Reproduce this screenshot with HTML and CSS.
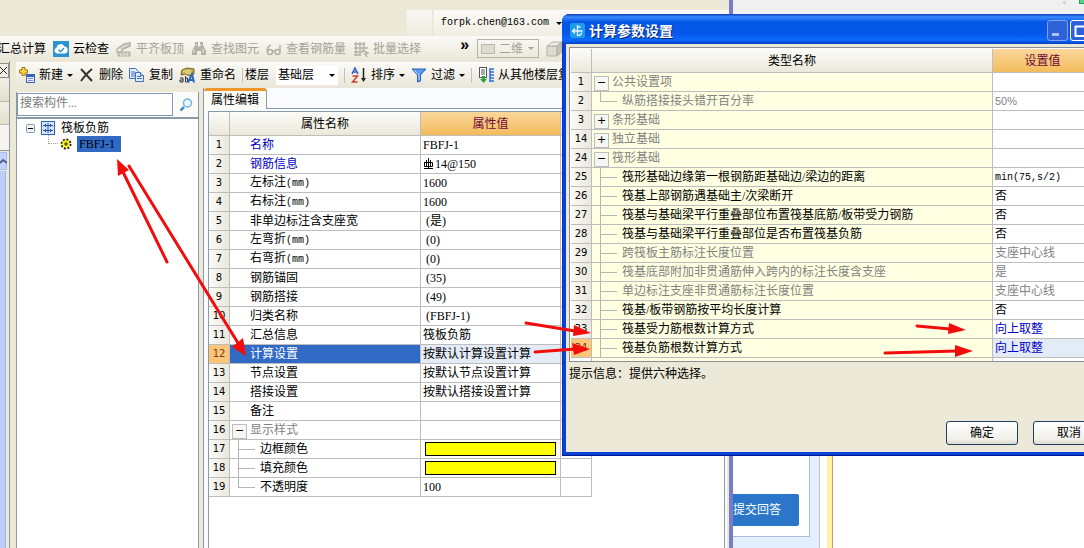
FILE: index.html
```html
<!DOCTYPE html>
<html lang="zh-CN">
<head>
<meta charset="utf-8">
<title>计算参数设置</title>
<link rel="stylesheet" href="styles.css">
</head>
<body>
<div class="desktop">

<section class="browser">
  <div class="browser-top"><i class="dot"></i><i class="green"></i></div>
  <div class="browser-page">
    <div class="answer">
      <div class="answer-card"><button class="submit" type="button">提交回答</button></div>
    </div>
    <div class="stripe"></div>
  </div>
</section>

<main class="app">
  <header class="app-top">
    <span class="blank-tab"></span>
    <button class="account" type="button"><span class="mono">forpk.chen@163.com</span><i class="caret"></i></button>
  </header>

  <nav class="bar bar-main">
    <button class="tool first" type="button">汇总计算</button>
    <button class="tool" type="button">
      <svg width="16" height="16" viewBox="0 0 16 16"><rect width="16" height="16" fill="#2b93cf"/><path d="M4 12.500a3 3 0 0 1-.5-5.800A4.200 4.200 0 0 1 11.500 5.600 3.500 3.500 0 0 1 12 12.500z" fill="#fff"/><path d="M5.500 8.800l2 2 3.500-3.600" fill="none" stroke="#2b93cf" stroke-width="1.500"/></svg>云检查</button>
    <button class="tool" type="button" disabled>
      <svg width="16" height="16" viewBox="0 0 16 16" fill="none" stroke="#b4b1a4"><path d="M1 8l7-5 6-1v3L7 8" fill="#d8d5c8" stroke-width="1.500"/><path d="M1 8v3h4l2-3" stroke-width="1.500"/><path d="M2 11h12v4H2z" fill="#c4c1b5"/><path d="M5 12v3M8 12v3M11 12v3" stroke="#f1efe6"/></svg>平齐板顶</button>
    <button class="tool" type="button" disabled>
      <svg width="16" height="16" viewBox="0 0 16 16" fill="#b4b1a4"><path d="M4 1h3v4l1 1 1-1V1h3v3l3 6v4h-5v-4H6v4H1v-4l3-6z"/><path d="M3 8v4M12 8v4M5 3v2M10 3v2" stroke="#e9e6d9"/></svg>查找图元</button>
    <button class="tool" type="button" disabled>
      <svg width="16" height="16" viewBox="0 0 16 16" fill="none" stroke="#b4b1a4" stroke-width="1.500"><path d="M5 4C2 5 1 8 1 11"/><circle cx="4" cy="11" r="2.500"/><path d="M6.500 10h3"/><circle cx="11.500" cy="11" r="2.500"/><path d="M14 11V4"/></svg>查看钢筋量</button>
    <button class="tool" type="button" disabled>
      <svg width="16" height="16" viewBox="0 0 16 16" fill="none" stroke="#b4b1a4"><path d="M1 3h11M1 7h14M1 11h9M1 14h7M3 1v14M7 1v13M11 1v9" stroke-width="1.300"/><path d="M9 9l6 3-3 1 2 3" stroke-width="1.500"/></svg>批量选择</button>
    <button class="more" type="button" aria-label="更多">»</button>
    <label class="view">
      <svg width="14" height="10" viewBox="0 0 14 10"><rect x=".5" y=".5" width="13" height="9" fill="#dedbd0" stroke="#bbb8ac"/></svg>
      <select disabled aria-label="视图"><option>二维</option></select><i class="caret"></i>
    </label>
    <button class="cube" type="button" disabled aria-label="三维">
      <svg width="17" height="16" viewBox="0 0 17 16" stroke="#b4b1a4" fill="#dedbd0"><path d="M1 5h10v10H1z"/><path d="M1 5l5-4h10l-5 4z" fill="#eeece3"/><path d="M11 5l5-4v10l-5 4z" fill="#c4c1b5"/></svg>
    </button>
  </nav>

  <div class="work">
    <aside class="strip">
      <button class="strip-close" type="button" aria-label="关闭"><svg width="7" height="7" viewBox="0 0 7 7" stroke="#222"><path d="M0 0l7 7M7 0L0 7"/></svg></button>
      <div class="strip-head"></div>
      <div class="strip-head"></div>
      <div class="strip-gap"></div>
      <div class="scroll-up"><svg width="7" height="6" viewBox="0 0 7 6" fill="none" stroke="#4d6185" stroke-width="2"><path d="M0 5l3-3 4 3"/></svg></div>
      <div class="scroll-thumb"></div>
    </aside>

    <div class="workspace">
      <nav class="bar bar-sub">
        <button class="tool" type="button">
          <svg width="16" height="16" viewBox="0 0 16 16"><path d="M3 .5h3v2.500h2.500v3H6v2.500H3V6H.5V3H3z" fill="#f9d54a" stroke="#a87808"/><rect x="7.500" y="7.500" width="8" height="8" fill="#e8f0ff" stroke="#3a62b8"/><path d="M8 9h7" stroke="#3a62b8" stroke-width="2"/><path d="M9 11.500h5M9 13.500h5" stroke="#6f93d6"/></svg>新建<i class="caret"></i></button>
        <button class="tool" type="button">
          <svg width="16" height="16" viewBox="0 0 16 16" stroke="#333" stroke-width="2" fill="none"><path d="M2 2l11 12M13 2C8 6 5 10 2 14"/></svg>删除</button>
        <button class="tool" type="button">
          <svg width="16" height="16" viewBox="0 0 16 16" fill="#e4eeff" stroke="#3f6fc4"><path d="M.5 1.500h6l3 3v7h-9z"/><path d="M2 5h4M2 7h4M2 9h4"/><path d="M6.500 5.500h5l3 3v6h-8z"/><path d="M8 9.500h4M8 11.500h5M11.500 5.500v3h3"/></svg>复制</button>
        <button class="tool" type="button">
          <svg width="17" height="16" viewBox="0 0 17 16" fill="none"><path d="M3 3l5-2 7 1v5l-5 2-3-2-5 1z" fill="#c9b24a" stroke="#6f6325"/><path d="M4 4h8M6 6h7" stroke="#f5e9a0"/><path d="M1 11h3v4M4 13H1v2h3M6.500 9v6h2v-4h-2" stroke="#333"/><path d="M9 15.500l4-8.500 2 8.500M11 13h4" stroke="#2b66c4" stroke-width="2"/></svg>重命名</button>
        <i class="sep"></i>
        <label class="floor"><span>楼层</span>
          <span class="floor-box"><select aria-label="楼层"><option>基础层</option></select><i class="caret"></i></span></label>
        <i class="sep"></i>
        <button class="tool" type="button">
          <svg width="16" height="16" viewBox="0 0 16 16" fill="none"><path d="M1 7l3-6 3 6M2 5h4" stroke="#2f5fc0" stroke-width="1.500"/><path d="M1.500 9h5l-5 6h5" stroke="#c8402c" stroke-width="1.500"/><path d="M12.500 1v12" stroke="#222" stroke-width="1.500"/><path d="M10 11l2.500 4 2.500-4z" fill="#222"/></svg>排序<i class="caret"></i></button>
        <button class="tool" type="button">
          <svg width="16" height="16" viewBox="0 0 16 16"><path d="M1 2h14L9.500 8v6l-3 1V8z" fill="#5b9bee" stroke="#2b5fbd"/><path d="M3 3l5 5v5" fill="none" stroke="#b9d8ff"/></svg>过滤<i class="caret"></i></button>
        <i class="sep"></i>
        <button class="tool" type="button">
          <svg width="16" height="16" viewBox="0 0 16 16"><rect x="1.500" y=".5" width="7" height="10" fill="#fff" stroke="#555"/><path d="M3 3h4M3 5h4M3 7h4" stroke="#555"/><path d="M4 9h3v3h2l-3.500 4L2 12h2z" fill="#2fa040"/><path d="M16 2h-4v13M12 5h4M12 8h4M12 11h4M12 14h4" fill="none" stroke="#2f6fd0" stroke-width="1.500"/></svg>从其他楼层复制</button>
      </nav>

      <div class="panels">
        <section class="side">
          <form class="search">
            <input type="text" placeholder="搜索构件..." aria-label="搜索构件">
            <button type="button" aria-label="搜索"><svg width="14" height="14" viewBox="0 0 14 14" fill="none"><path d="M1.500 12.500L5 9" stroke="#4a90c8" stroke-width="2.500"/><circle cx="8.500" cy="5" r="4" fill="#eef8ff" stroke="#6cb6e4" stroke-width="1.500"/></svg></button>
          </form>
          <ul class="tree">
            <li><svg width="9" height="9" viewBox="0 0 9 9"><rect x=".5" y=".5" width="8" height="8" rx="1" fill="#f4f3ee" stroke="#7b9ac0"/><path d="M2 4.500h5" stroke="#000"/></svg>
              <svg class="grid-ic" width="14" height="14" viewBox="0 0 14 14"><rect x=".5" y=".5" width="13" height="13" fill="#d5e4fb" stroke="#3464b4"/><path d="M2 4.500h10M2 9.500h10M7 2v10M4.500 3v3M9.500 3v3M4.500 8v3M9.500 8v3" stroke="#24529f"/></svg>
              <span>筏板负筋</span></li>
            <li class="child"><i class="elbow"></i><svg width="12" height="12" viewBox="0 0 12 12"><circle cx="6" cy="6" r="4.500" fill="#fff21c" stroke="#222" stroke-width="2" stroke-dasharray="2 1.500"/><circle cx="6" cy="6" r="3.500" fill="#fff21c"/><path d="M6 4v4M4 6h4" stroke="#222"/></svg>
              <span class="picked">FBFJ-1</span></li>
          </ul>
        </section>

        <section class="props">
          <div class="tabs"><button class="tab" type="button">属性编辑</button></div>
          <div class="sheet">
            <table class="grid prop-grid">
              <colgroup><col class="c-no"><col class="c-name"><col class="c-val"><col class="c-extra"></colgroup>
              <thead><tr><th></th><th>属性名称</th><th class="hot">属性值</th><th></th></tr></thead>
              <tbody>
                <tr><th>1</th><td class="blue">名称</td><td>FBFJ-1</td><td></td></tr>
                <tr><th>2</th><td class="blue">钢筋信息</td><td><svg class="rebar" width="11" height="12" viewBox="0 0 11 12" fill="none" stroke="#000"><path d="M5.500 0v10M3.500 2v7M7.500 2v7M1.500 4v4.500h8V4.500h-8M1 10.500h9"/></svg>14@150</td><td></td></tr>
                <tr><th>3</th><td>左标注<span class="mono">(mm)</span></td><td>1600</td><td></td></tr>
                <tr><th>4</th><td>右标注<span class="mono">(mm)</span></td><td>1600</td><td></td></tr>
                <tr><th>5</th><td>非单边标注含支座宽</td><td>&nbsp;(是)</td><td></td></tr>
                <tr><th>6</th><td>左弯折<span class="mono">(mm)</span></td><td>&nbsp;(0)</td><td></td></tr>
                <tr><th>7</th><td>右弯折<span class="mono">(mm)</span></td><td>&nbsp;(0)</td><td></td></tr>
                <tr><th>8</th><td>钢筋锚固</td><td>&nbsp;(35)</td><td></td></tr>
                <tr><th>9</th><td>钢筋搭接</td><td>&nbsp;(49)</td><td></td></tr>
                <tr><th>10</th><td>归类名称</td><td>&nbsp;(FBFJ-1)</td><td></td></tr>
                <tr><th>11</th><td>汇总信息</td><td>筏板负筋</td><td></td></tr>
                <tr class="active"><th>12</th><td class="sel">计算设置</td><td>按默认计算设置计算</td><td></td></tr>
                <tr><th>13</th><td>节点设置</td><td>按默认节点设置计算</td><td></td></tr>
                <tr><th>14</th><td>搭接设置</td><td>按默认搭接设置计算</td><td></td></tr>
                <tr><th>15</th><td>备注</td><td></td><td></td></tr>
                <tr><th>16</th><td class="group open">显示样式</td><td></td><td></td></tr>
                <tr><th>17</th><td class="leaf">边框颜色</td><td><span class="swatch"></span></td><td></td></tr>
                <tr><th>18</th><td class="leaf">填充颜色</td><td><span class="swatch"></span></td><td></td></tr>
                <tr><th>19</th><td class="leaf last">不透明度</td><td>100</td><td></td></tr>
              </tbody>
            </table>
          </div>
        </section>
      </div>
    </div>
  </div>
</main>

<section class="dialog" role="dialog" aria-labelledby="dlg-title">
  <header class="title">
    <svg width="15" height="15" viewBox="0 0 15 15"><rect width="15" height="15" rx="2" fill="#1f9be8"/><path d="M7.500 2v11M2 8h10.500M5 5.500L2.500 8 5 10.500M7.500 4h3M7.500 12.500c2 0 4-1 4-3" fill="none" stroke="#e8f6ff" stroke-width="1.300"/></svg>
    <h1 id="dlg-title">计算参数设置</h1>
    <button class="win" type="button" aria-label="最小化"><svg width="19" height="19" viewBox="0 0 19 19"><path d="M4 13.500h7" stroke="#a9c1f5" stroke-width="3"/></svg></button>
    <button class="win bright" type="button" aria-label="最大化"><svg width="19" height="19" viewBox="0 0 19 19"><path d="M4.500 5v10h10V5M4 5.500h11" fill="none" stroke="#fff" stroke-width="2"/></svg></button>
    <button class="win close" type="button" aria-label="关闭"><svg width="19" height="19" viewBox="0 0 19 19"><path d="M5 5l9 9M14 5l-9 9" stroke="#fff" stroke-width="2"/></svg></button>
  </header>
  <div class="dlg-body">
    <div class="dlg-sheet">
      <table class="grid dlg-grid">
        <colgroup><col class="d-no"><col class="d-name"><col class="d-val"><col></colgroup>
        <thead><tr><th></th><th>类型名称</th><th class="hot">设置值</th><th></th></tr></thead>
        <tbody>
          <tr><th>1</th><td class="group open">公共设置项</td><td></td><td></td></tr>
          <tr><th>2</th><td class="leaf last dim">纵筋搭接接头错开百分率</td><td class="dim small">50%</td><td></td></tr>
          <tr><th>3</th><td class="group">条形基础</td><td></td><td></td></tr>
          <tr><th>14</th><td class="group">独立基础</td><td></td><td></td></tr>
          <tr><th>24</th><td class="group open">筏形基础</td><td></td><td></td></tr>
          <tr><th>25</th><td class="leaf">筏形基础边缘第一根钢筋距基础边/梁边的距离</td><td><span class="mono">min(75,s/2)</span></td><td></td></tr>
          <tr><th>26</th><td class="leaf">筏基上部钢筋遇基础主/次梁断开</td><td>否</td><td></td></tr>
          <tr><th>27</th><td class="leaf">筏基与基础梁平行重叠部位布置筏基底筋/板带受力钢筋</td><td>否</td><td></td></tr>
          <tr><th>28</th><td class="leaf">筏基与基础梁平行重叠部位是否布置筏基负筋</td><td>否</td><td></td></tr>
          <tr><th>29</th><td class="leaf dim">跨筏板主筋标注长度位置</td><td class="dim">支座中心线</td><td></td></tr>
          <tr><th>30</th><td class="leaf dim">筏基底部附加非贯通筋伸入跨内的标注长度含支座</td><td class="dim">是</td><td></td></tr>
          <tr><th>31</th><td class="leaf dim">单边标注支座非贯通筋标注长度位置</td><td class="dim">支座中心线</td><td></td></tr>
          <tr><th>32</th><td class="leaf">筏基/板带钢筋按平均长度计算</td><td>否</td><td></td></tr>
          <tr><th>33</th><td class="leaf">筏基受力筋根数计算方式</td><td class="blue">向上取整</td><td></td></tr>
          <tr class="active"><th>34</th><td class="leaf">筏基负筋根数计算方式</td><td class="blue">向上取整</td><td></td></tr>
          <tr class="stub"><th></th><td></td><td></td><td></td></tr>
        </tbody>
      </table>
    </div>
    <p class="hint">提示信息：提供六种选择。</p>
    <footer class="actions"><button type="button">确定</button><button type="button">取消</button></footer>
  </div>
</section>

<svg class="marks" width="1084" height="548" viewBox="0 0 1084 548" aria-hidden="true">
  <g stroke="#f20d0d" stroke-width="3" stroke-linecap="round">
    <path d="M167 262L123 172M129 166L238 343"/>
    <path d="M526 323L575 331M535 352L575 349M917 326L950 329M885 353L957 351"/>
  </g>
  <g fill="#f20d0d">
    <path d="M117 159l1 17 11-6z"/>
    <path d="M246 356l-14-9 11-9z"/>
    <path d="M591 333l-17-8-1 11z"/>
    <path d="M590 349l-18-6 2 12z"/>
    <path d="M966 330l-17-7-1 11z"/>
    <path d="M973 351l-18-6v12z"/>
  </g>
</svg>
</div>
</body>
</html>
```
FILE: styles.css
```css
* { box-sizing: border-box; }
body {
  margin: 0;
  overflow: hidden;
  font: 12px/16px "Liberation Serif", "Noto Sans CJK SC", sans-serif;
  color: #000;
}
button, input, select { font: inherit; color: inherit; margin: 0; }
button { padding: 0; border: 0; background: none; }
svg { display: block; flex: none; }
.mono { font-family: "Liberation Mono", monospace; font-size: 10px; }
.caret {
  flex: none;
  width: 5px;
  border: 3px solid transparent;
  border-top-color: currentColor;
  border-bottom: 0;
}

.desktop { position: relative; height: 100vh; background: #fff; overflow: hidden; }

/* browser window behind the application */
.browser { position: absolute; inset: 0 0 0 733px; display: flex; flex-direction: column; }
.browser-top { height: 32px; background: #f0f0f0; display: flex; justify-content: flex-end; gap: 13px; }
.dot { width: 3px; height: 3px; margin-top: 1px; border-radius: 2px; background: #ccc; }
.green { width: 5px; height: 4px; background: #4fd68a; border: 1px solid #2c9c5a; border-top: 0; border-right: 0; }
.browser-page { flex: 1; display: flex; gap: 7px; }
.answer { width: 87px; padding: 0 9px 11px 0; background: #e3effc; border-right: 1px solid #b3c3df; }
.answer-card {
  height: 100%;
  padding: 0 10px 10px 0;
  display: flex;
  align-items: flex-end;
  background: #fff;
  border-right: 1px solid #a9bbdb;
  border-bottom: 1px solid #a9bbdb;
}
.submit { width: 100%; height: 32px; background: #2a76c9; color: #fff; border-radius: 0 2px 2px 0; text-align: left; white-space: nowrap; }
.stripe { width: 6px; background: #fff3a5; border-right: 1px solid #c89a80; }

/* application window */
.app {
  position: absolute;
  inset: 0 auto 0 0;
  width: 733px;
  display: flex;
  flex-direction: column;
  background: #ece9d8;
  border-right: 4px solid #7b7cc8;
}
.app-top { height: 36px; padding-top: 10px; display: flex; gap: 2px; }
.blank-tab { width: 25px; margin-left: 407px; background: linear-gradient(#f9f8f3, #efecdf); }
.account { flex: 1; display: flex; align-items: center; gap: 7px; padding-left: 7px; background: linear-gradient(#fbfaf6, #f0eee2); }
.bar { display: flex; align-items: center; white-space: nowrap; overflow: hidden; background: linear-gradient(#fbfaf7, #e9e6d8); }
.bar-main { height: 25px; gap: 7px; }
.tool { display: flex; align-items: center; gap: 4px; flex: none; }
.tool:disabled { color: #a5a296; }
.first { margin-left: -2px; }
.more { margin: 0 0 8px 31px; font: bold 16px/16px "Liberation Sans", sans-serif; width: 11px; }
.view { display: flex; align-items: center; width: 62px; height: 19px; padding: 0 4px 0 3px; gap: 4px; border: 1px solid #b5b2a6; color: #a5a296; }
.view select, .floor select { appearance: none; border: 0; padding: 0; background: none; opacity: 1; flex: 1; min-width: 0; }
.cube { flex: none; }

.work { flex: 1; display: flex; min-height: 0; }
.strip { width: 10px; display: flex; flex-direction: column; border-right: 1px solid #8a9ba8; }
.strip-close { height: 15px; margin: 2px 0 1px; border: 1px solid #8e8e86; border-left: 0; background: #f1efe6; display: flex; align-items: center; }
.strip-head { height: 23px; background: linear-gradient(#f1efe6, #e2dfcc); border-bottom: 1px solid #bcb9a8; }
.strip-gap { height: 26px; background: #f6f5f0; border-bottom: 1px solid #8a9ba8; }
.scroll-up { height: 18px; margin: 1px 2px 1px 0; background: #c3d3fd; display: flex; align-items: center; border: 1px solid #a9bdf0; border-left: 0; }
.scroll-thumb { flex: 1; margin-right: 3px; background: #bccdf8; border-right: 1px solid #9fb4ea; }
.workspace { flex: 1; min-width: 0; margin-left: 6px; display: flex; flex-direction: column; }
.bar-sub { height: 26px; margin-top: 1px; padding-left: 3px; gap: 6px; }
.sep { flex: none; width: 1px; height: 15px; background: #c5c2b4; }
.floor { display: flex; align-items: center; gap: 7px; margin-left: -4px; }
.floor-box { display: flex; align-items: center; width: 62px; height: 19px; padding: 0 3px 0 2px; background: #fff; }

.panels { flex: 1; display: flex; gap: 4px; min-height: 0; }
.side { width: 183px; margin-top: 4px; display: flex; flex-direction: column; background: #fff; border: solid #8a9ba8; border-width: 0 1px 0 1px; }
.search { display: flex; gap: 1px; height: 27px; padding: 1px 0; border-bottom: 2px solid #8a9ba8; }
.search input { flex: 1; min-width: 0; border: 1px solid #8098ae; padding: 0 2px 4px; background: #fff; }
.search input::placeholder { color: #7c7c7c; opacity: 1; }
.search button { width: 24px; background: #fafaf8; display: flex; align-items: center; justify-content: center; }
.tree { list-style: none; margin: 0; padding: 1px 0 0 9px; }
.tree li { display: flex; align-items: center; height: 16px; gap: 6px; }
.tree .child { padding-left: 22px; gap: 5px; }
.elbow { width: 10px; height: 9px; margin: -9px -3px 0 0; border: dotted #a0a0a0; border-width: 0 0 1px 1px; }
.picked { padding: 0 6px 0 2px; background: #316ac5; }

.props { flex: 1; min-width: 0; margin-right: 2px; display: flex; flex-direction: column; background: #fafbfd; border-left: 1px solid #8a9ba8; }
.tabs { height: 21px; border-bottom: 1px solid #8a9ba8; }
.tab { display: block; width: 63px; height: 21px; background: #fbfbf8; border: 1px solid #8a9ba8; border-top: 3px solid #f0962a; border-bottom: 0; border-left: 0; border-radius: 3px 3px 0 0; }
.sheet { flex: 1; min-height: 0; margin: 2px 2px 0 4px; background: #fff; border: 1px solid #8a9ba8; border-bottom: 0; }

/* numbered property tables */
.grid { border-collapse: separate; border-spacing: 0; table-layout: fixed; }
.grid td, .grid th { height: 19px; padding: 0 2px; font-weight: normal; text-align: left; border: solid #bdbdbd; border-width: 0 1px 1px 0; line-height: 16px; white-space: nowrap; overflow: hidden; }
.grid thead th { height: 24px; text-align: center; background: linear-gradient(#fbfbf8, #ebe8da); }
.grid thead .hot { background: linear-gradient(#fad79c, #f2bc5c); color: #70083a; }
.grid tbody th { padding: 0; text-align: center; font: 10px/16px "DejaVu Sans", sans-serif; background: linear-gradient(90deg, #fafaf7, #ebe8dc); }
.grid tbody td:nth-child(2) { padding-left: 20px; }
.grid .active th { background: #fbc677; color: #7a3a1a; }
.grid .active td { background: #e3ebf6; }
.grid .active td.sel { background: #316ac5; color: #fff; }
.grid td.blue { color: #0000c8; }
.grid td.dim, .grid td.group { color: #828282; }
.grid td.small { font-family: "Liberation Sans", sans-serif; font-size: 11px; }
.grid td.group::before {
  content: "+";
  float: left;
  width: 13px;
  height: 13px;
  margin: 2px 0 0 -18px;
  border: 1px solid #bdbdbd;
  background: #f6f6f2;
  color: #000;
  font: 11px/11px "DejaVu Sans", sans-serif;
  text-align: center;
}
.grid td.open::before { content: "−"; }
.grid tbody td.leaf:nth-child(2) {
  padding-left: 30px;
  background-image: linear-gradient(#b5b5b5, #b5b5b5), linear-gradient(#b5b5b5, #b5b5b5);
  background-repeat: no-repeat;
  background-position: 8px 0, 8px 9px;
  background-size: 1px 100%, 17px 1px;
}
.grid tbody td.last:nth-child(2) { background-size: 1px 9px, 17px 1px; }
.prop-grid { width: 383px; }
.c-no { width: 21px; }
.c-name { width: 191px; }
.c-val { width: 140px; }
.c-extra { width: 31px; }
.rebar { display: inline-block; margin-right: 1px; vertical-align: -2px; }
.swatch { display: block; height: 14px; margin: 0 2px; background: #ff0; border: 1px solid #000; }

/* settings dialog */
.dialog {
  position: absolute;
  inset: 14px -38px auto 562px;
  display: flex;
  flex-direction: column;
  background: #0842d8;
  border-radius: 8px 8px 0 0;
  padding: 0 4px 4px;
  box-shadow: inset 0 -1px #00178c, inset 1px 0 #0a34c0;
}
.title { height: 30px; margin: 0 -4px; padding: 2px 8px 0; display: flex; align-items: center; gap: 2px; color: #fff; border-radius: 7px 7px 0 0; background: linear-gradient(#0a3fb8, #3a8bff 3px, #0556e4 8px, #0558ea 20px, #0a6bff 26px, #0441c0); }
.title h1 { flex: 1; margin: 0 0 0 2px; font: bold 14px/18px "Noto Sans CJK SC", sans-serif; text-shadow: 1px 1px #04226e; }
.win { width: 21px; height: 21px; background: #2f62d8; border: 1px solid #7fa4ee; border-radius: 3px; }
.win.bright { border-color: #fff; }
.win.close { background: #d8492a; border-color: #fff; }
.dlg-body { background: #ece9d8; padding: 3px 3px 7px; }
.dlg-sheet { background: #fff; border: 1px solid #8a8f96; padding: 1px 0 0 1px; }
.dlg-grid { width: 100%; }
.dlg-grid tbody td:nth-child(2) { background-color: #ffffe1; }
.dlg-grid .active td:nth-child(2) { background-color: #ffffe1; }
.dlg-grid .stub td, .dlg-grid .stub th { height: 3px; line-height: 0; border-bottom: 0; background: #fff; }
.d-no { width: 21px; }
.d-name { width: 401px; }
.d-val { width: 100px; }
.hint { margin: 4px 0 0; }
.actions { margin-top: 39px; padding-right: 10px; display: flex; justify-content: flex-end; gap: 15px; }
.actions button { width: 72px; height: 24px; background: linear-gradient(#fff, #f0efe8 80%, #dcd8cc); border: 1px solid #1c3f63; border-radius: 3px; }

.marks { position: absolute; inset: 0 auto auto 0; pointer-events: none; }
```
